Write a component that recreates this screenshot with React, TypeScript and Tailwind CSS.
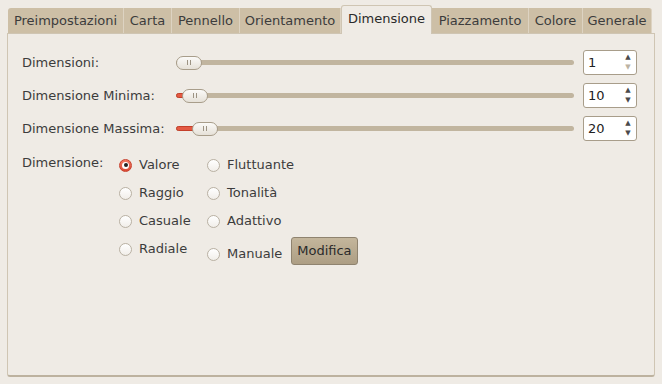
import React from 'react';

const tabs: { label: string; w: string }[] = [
  { label: 'Preimpostazioni', w: 'w-[116px]' },
  { label: 'Carta', w: 'w-[48px]' },
  { label: 'Pennello', w: 'w-[68px]' },
  { label: 'Orientamento', w: 'w-[101px]' },
  { label: 'Dimensione', w: 'w-[91px]' },
  { label: 'Piazzamento', w: 'w-[97px]' },
  { label: 'Colore', w: 'w-[54px]' },
  { label: 'Generale', w: 'w-[69px]' },
];

const Slider: React.FC<{ pos: number }> = ({ pos }) => (
  <div className="relative flex-1 h-[16px] flex items-center">
    <div className="absolute left-0 right-0 h-[5px] rounded-full bg-[#c1b59f]" />
    {pos > 0 && (
      <div className="absolute left-0 h-[5px] rounded-full bg-[#e45a43] border border-[#c43f2a]" style={{ width: pos + 6 }} />
    )}
    <div
      className="absolute top-[1px] w-[26px] h-[14px] rounded-full border border-[#a89d8a] bg-gradient-to-b from-[#fbfaf8] to-[#e6e1d8] flex items-center justify-center gap-[2px]"
      style={{ left: pos }}
    >
      <span className="w-px h-[5px] bg-[#9c9383]" />
      <span className="w-px h-[5px] bg-[#9c9383]" />
    </div>
  </div>
);

const Spin: React.FC<{ value: string; downOff?: boolean }> = ({ value, downOff }) => (
  <div className="w-[54px] h-[25px] rounded-[3px] border border-[#a89d8a] bg-white flex">
    <div className="flex-1 pl-[4px] flex items-center text-[#222]">{value}</div>
    <div className="w-[16px] flex flex-col items-center justify-between py-[2px] text-[7px] leading-[9px]">
      <span className="text-[#4a4a4a]">▲</span>
      <span className={downOff ? 'text-[#bcb3a3]' : 'text-[#4a4a4a]'}>▼</span>
    </div>
  </div>
);

const Radio: React.FC<{ label: string; checked?: boolean }> = ({ label, checked }) => (
  <div className="flex items-center gap-[7px]">
    {checked ? (
      <span className="w-[13px] h-[13px] rounded-full border border-[#c8412e] bg-gradient-to-b from-[#f27a64] to-[#dc4a34] flex items-center justify-center">
        <span className="w-[7px] h-[7px] rounded-full bg-white flex items-center justify-center">
          <span className="w-[4px] h-[4px] rounded-full bg-[#222]" />
        </span>
      </span>
    ) : (
      <span className="w-[13px] h-[13px] rounded-full border border-[#b9b1a3] bg-gradient-to-b from-[#ffffff] to-[#f1eee9]" />
    )}
    <span>{label}</span>
  </div>
);

const rows = [
  { label: 'Dimensioni:', pos: 0, value: '1', downOff: true },
  { label: 'Dimensione Minima:', pos: 6, value: '10' },
  { label: 'Dimensione Massima:', pos: 16, value: '20' },
];

export default function App() {
  return (
    <div className="w-[662px] h-[384px] bg-[#efebe5] text-[13px] text-[#3c3c3c] pt-[5px] pl-[7px] pr-[7px] pb-[7px] flex flex-col" style={{ fontFamily: '"DejaVu Sans", sans-serif' }}>
      <div className="flex items-end pl-[1px] h-[28px] relative z-10">
        {tabs.map((t) =>
          t.label === 'Dimensione' ? (
            <div key={t.label} className={`${t.w} h-[29px] -mb-px pt-[3px] bg-[#efebe5] border border-b-0 border-[#cfc5b3] rounded-t-[3px] flex justify-center items-start text-[#2a2a2a] whitespace-nowrap`}>
              {t.label}
            </div>
          ) : (
            <div key={t.label} className={`${t.w} h-[25px] bg-[#cdbfa6] border-r border-[#ddd3c2] first:rounded-tl-[3px] last:rounded-tr-[3px] flex justify-center items-center whitespace-nowrap`}>
              {t.label}
            </div>
          )
        )}
      </div>
      <div className="flex-1 border border-[#cfc5b3] border-b-2 border-b-[#bdb29f] rounded-b-[3px] pl-[14px] pr-[17px] pt-[16px]">
        <div className="flex flex-col gap-[8px]">
          {rows.map((r) => (
            <div key={r.label} className="flex items-center h-[25px]">
              <div className="w-[154px]">{r.label}</div>
              <Slider pos={r.pos} />
              <div className="ml-[9px]">
                <Spin value={r.value} downOff={r.downOff} />
              </div>
            </div>
          ))}
        </div>
        <div className="flex mt-[12px]">
          <div className="w-[97px]">Dimensione:</div>
          <div className="grid grid-cols-[88px_auto] gap-y-[8px] pt-[2px]">
            <div className="h-[20px] flex items-center"><Radio label="Valore" checked /></div>
            <div className="h-[20px] flex items-center"><Radio label="Fluttuante" /></div>
            <div className="h-[20px] flex items-center"><Radio label="Raggio" /></div>
            <div className="h-[20px] flex items-center"><Radio label="Tonalità" /></div>
            <div className="h-[20px] flex items-center"><Radio label="Casuale" /></div>
            <div className="h-[20px] flex items-center"><Radio label="Adattivo" /></div>
            <div className="h-[20px] flex items-center self-start"><Radio label="Radiale" /></div>
            <div className="flex items-center gap-[9px] -mt-[2px]">
              <div className="pt-[6px]"><Radio label="Manuale" /></div>
              <div className="h-[28px] px-[5px] flex items-center rounded-[3px] border border-[#8f836f] bg-gradient-to-b from-[#c4b69c] to-[#ad9e84] text-[#2a2a2a]">
                Modifica
              </div>
            </div>
          </div>
        </div>
      </div>
    </div>
  );
}
